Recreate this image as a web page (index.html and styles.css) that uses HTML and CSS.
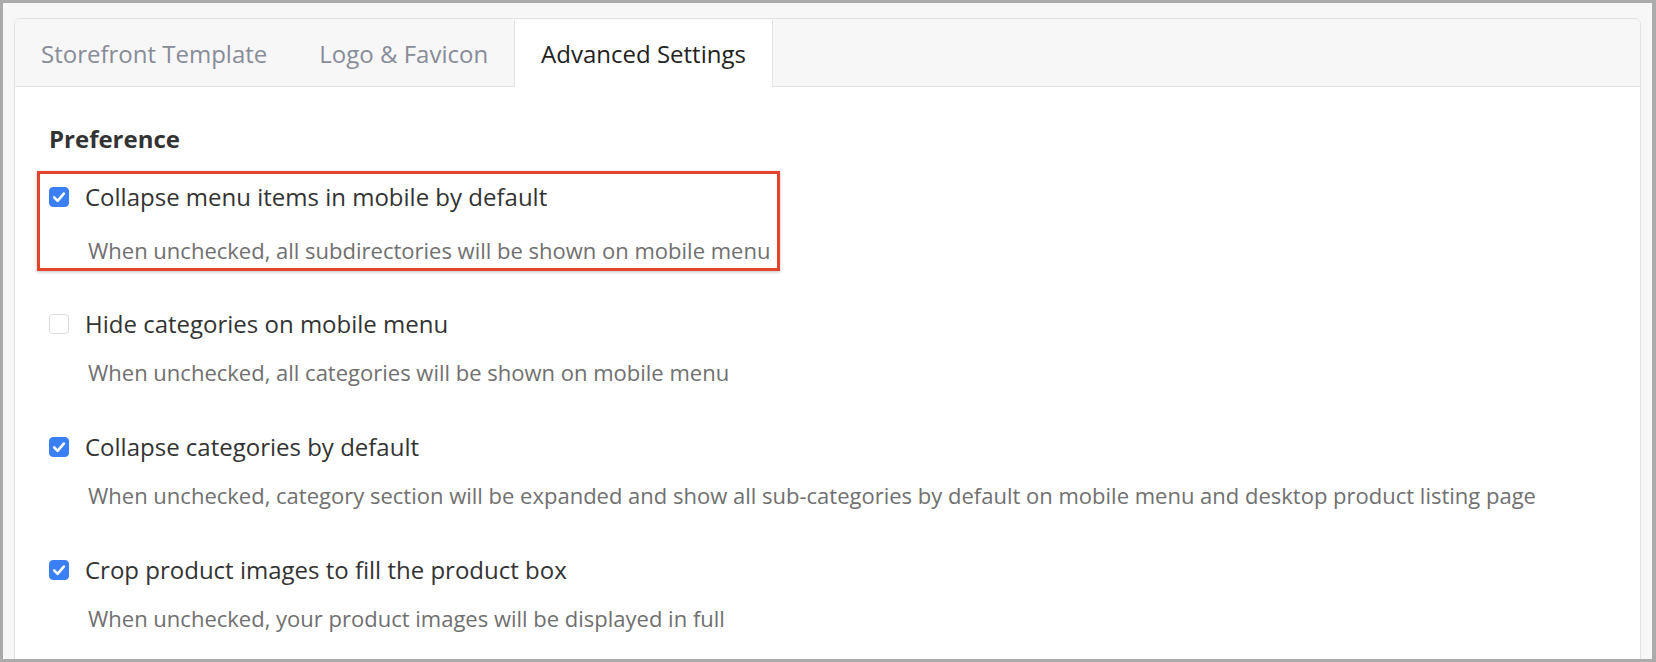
FILE: index.html
```html
<!DOCTYPE html>
<html>
<head>
<meta charset="utf-8">
<link rel="stylesheet" href="styles.css">
</head>
<body>
<div class="frame">
  <div class="panel">
    <div class="tabs">
      <div class="tab">Storefront Template</div>
      <div class="tab">Logo &amp; Favicon</div>
      <div class="tab active">Advanced Settings</div>
    </div>
    <div class="content">
      <h3 class="section-title">Preference</h3>
      <div class="option highlighted">
        <div class="option-row">
          <span class="check checked"><svg viewBox="0 0 20 20" width="20" height="20"><path d="M5.2 10.4 L8.6 13.8 L14.8 6.6" fill="none" stroke="#fff" stroke-width="2.6" stroke-linecap="round" stroke-linejoin="round"/></svg></span>
          <span class="label">Collapse menu items in mobile by default</span>
        </div>
        <div class="desc">When unchecked, all subdirectories will be shown on mobile menu</div>
      </div>
      <div class="option">
        <div class="option-row">
          <span class="check"></span>
          <span class="label">Hide categories on mobile menu</span>
        </div>
        <div class="desc">When unchecked, all categories will be shown on mobile menu</div>
      </div>
      <div class="option">
        <div class="option-row">
          <span class="check checked"><svg viewBox="0 0 20 20" width="20" height="20"><path d="M5.2 10.4 L8.6 13.8 L14.8 6.6" fill="none" stroke="#fff" stroke-width="2.6" stroke-linecap="round" stroke-linejoin="round"/></svg></span>
          <span class="label">Collapse categories by default</span>
        </div>
        <div class="desc">When unchecked, category section will be expanded and show all sub-categories by default on mobile menu and desktop product listing page</div>
      </div>
      <div class="option">
        <div class="option-row">
          <span class="check checked"><svg viewBox="0 0 20 20" width="20" height="20"><path d="M5.2 10.4 L8.6 13.8 L14.8 6.6" fill="none" stroke="#fff" stroke-width="2.6" stroke-linecap="round" stroke-linejoin="round"/></svg></span>
          <span class="label">Crop product images to fill the product box</span>
        </div>
        <div class="desc">When unchecked, your product images will be displayed in full</div>
      </div>
    </div>
  </div>
</div>
</body>
</html>
```
FILE: styles.css
```css
html, body {
  margin: 0;
  padding: 0;
  height: 100%;
}
body {
  background: #ababab;
  padding: 3px 4px 3px 3px;
  box-sizing: border-box;
  font-family: "Open Sans", "Noto Sans", sans-serif;
  overflow: hidden;
}
.frame {
  background: #f7f7f7;
  height: 100%;
  padding: 15px 11px 0 11px;
  box-sizing: border-box;
  overflow: hidden;
}
.panel {
  background: #fff;
  border: 1px solid #e3e3e3;
  border-radius: 6px 6px 0 0;
  height: 800px;
  overflow: hidden;
}
.tabs {
  display: flex;
  background: #f7f7f7;
  height: 67px;
  border-bottom: 1px solid #e3e3e3;
}
.tab {
  padding: 0 26px;
  display: flex;
  align-items: center;
  font-size: 24px;
  color: #888c99;
  margin-bottom: -1px;
}
.tab.active {
  background: #fff;
  color: #222;
  border-left: 1px solid #e3e3e3;
  border-right: 1px solid #e3e3e3;
  margin-top: 1px;
  padding: 0 26px;
}
.content {
  padding: 36px 34px 0 34px;
}
.section-title {
  margin: 0 0 16px 0;
  font-size: 24px;
  font-weight: 700;
  color: #333;
  line-height: 32px;
}
.option {
  padding: 0 0 45px 0;
}
.option.highlighted {
  margin: 0 0 38px -12px;
  padding: 8px 7px 3px 9px;
  border: 3px solid #e4432c;
  box-shadow: 0 1px 3px rgba(0,0,0,0.25);
  width: max-content;
}
.option-row {
  display: flex;
  align-items: center;
  gap: 16px;
  height: 30px;
}
.check {
  width: 20px;
  height: 20px;
  border-radius: 4px;
  box-sizing: border-box;
  border: 1px solid #dcdcdc;
  background: #fff;
  display: inline-block;
  flex: none;
}
.check.checked {
  background: #3b7ff5;
  border-color: #3b7ff5;
}
.check svg {
  display: block;
  margin: -1px;
}
.label {
  font-size: 24px;
  color: #333;
  line-height: 30px;
}
.desc {
  margin-top: 18px;
  padding-left: 39px;
  font-size: 22px;
  color: #707070;
  line-height: 30px;
}
.highlighted .desc {
  margin-top: 23px;
}
```
